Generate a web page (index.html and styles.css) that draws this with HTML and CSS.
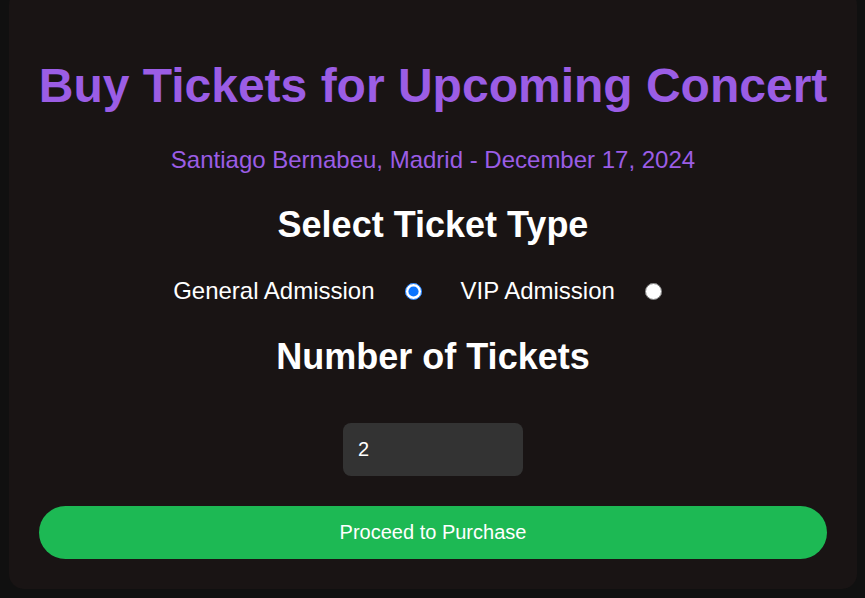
FILE: index.html
```html
<!DOCTYPE html>
<html lang="en">
<head>
<meta charset="utf-8">
<title>Buy Tickets</title>
<link rel="stylesheet" href="styles.css">
</head>
<body>
<main class="card">
  <h1 class="title">Buy Tickets for Upcoming Concert</h1>
  <p class="subtitle">Santiago Bernabeu, Madrid - December 17, 2024</p>
  <h2 class="section">Select Ticket Type</h2>
  <div class="options">
    <label class="option">General Admission <input type="radio" name="type" checked></label>
    <label class="option">VIP Admission <input type="radio" name="type"></label>
  </div>
  <h2 class="section section-qty">Number of Tickets</h2>
  <div class="qty-row"><input class="qty" type="number" value="2" min="1"></div>
  <button class="buy">Proceed to Purchase</button>
</main>
</body>
</html>
```

FILE: styles.css
```css
html, body {
  margin: 0;
  padding: 0;
  background: #101010;
  font-family: "Liberation Sans", Arial, sans-serif;
  height: 100%;
  overflow: hidden;
}
body {
  padding: 0 8px 0 9px;
  box-sizing: border-box;
}
.card {
  margin-top: -10px;
  background: #191414;
  border-radius: 15px;
  padding: 68px 30px 30px;
  display: flex;
  flex-direction: column;
  align-items: center;
  text-align: center;
}
.title {
  margin: 0;
  color: #9b5de5;
  font-size: 48px;
  font-weight: bold;
  line-height: 56px;
  white-space: nowrap;
}
.subtitle {
  margin: 32px 0 0;
  color: #9b5de5;
  font-size: 24px;
  line-height: 28px;
}
.section {
  color: #fff;
  font-size: 36px;
  font-weight: bold;
  margin: 30px 0 0;
  line-height: 42px;
}
.options {
  display: flex;
  gap: 39px;
  margin-top: 31px;
  padding-right: 31px;
}
.option {
  color: #fff;
  font-size: 24px;
  line-height: 28px;
  display: flex;
  align-items: center;
  gap: 30px;
}
.option input {
  width: 17px;
  height: 17px;
  margin: 0;
  accent-color: #0a74ff;
}
.section-qty { margin-top: 31px; }
.qty-row { margin-top: 45px; }
.qty {
  width: 180px;
  height: 53px;
  box-sizing: border-box;
  background: #333;
  border: none;
  border-radius: 8px;
  color: #fff;
  font-family: "Liberation Sans", Arial, sans-serif;
  font-size: 20px;
  padding: 0 15px;
  -moz-appearance: textfield;
}
.qty::-webkit-inner-spin-button, .qty::-webkit-outer-spin-button { -webkit-appearance: none; margin: 0; }
.buy {
  margin-top: 30px;
  width: 100%;
  height: 53px;
  border: none;
  border-radius: 27px;
  background: #1db954;
  color: #fff;
  font-family: "Liberation Sans", Arial, sans-serif;
  font-size: 20px;
}
```
